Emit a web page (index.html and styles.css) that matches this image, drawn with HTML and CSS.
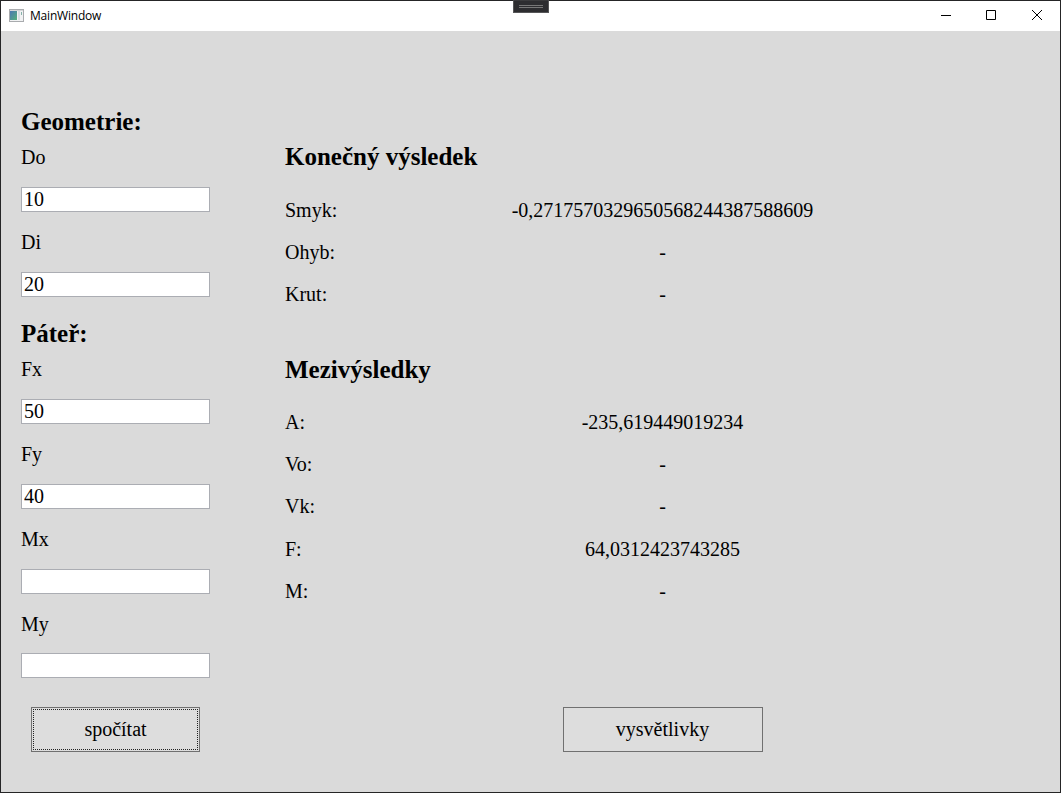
FILE: index.html
```html
<!DOCTYPE html>
<html lang="cs">
<head>
<meta charset="utf-8">
<title>MainWindow</title>
<link rel="stylesheet" href="styles.css">
</head>
<body>
<div class="window">
  <header class="titlebar">
    <svg class="app-icon" width="15" height="13" viewBox="0 0 15 13">
      <defs><linearGradient id="g" x1="0" y1="0" x2="1" y2="1"><stop offset="0" stop-color="#4a78b4"/><stop offset="1" stop-color="#55b07a"/></linearGradient></defs>
      <rect x=".5" y=".5" width="14" height="12" fill="#f1f2f3" stroke="#a9abae"/>
      <rect x="1" y="1" width="13" height="1" fill="#d4d6d8"/>
      <rect x="1" y="2" width="7" height="9" fill="url(#g)"/>
      <rect x="9" y="2" width="2" height="9" fill="#d8dfe3"/>
      <rect x="12" y="3" width="1" height="3" fill="#86b2aa"/>
    </svg>
    <span class="title">MainWindow</span>
    <div class="controls">
      <svg width="46" height="30" viewBox="0 0 46 30"><path d="M19 14.5h10" stroke="#000"/></svg>
      <svg width="46" height="30" viewBox="0 0 46 30"><path d="M18.5 9.5h9v9h-9z" fill="none" stroke="#000"/></svg>
      <svg width="46" height="30" viewBox="0 0 46 30"><path d="M18 9l10 10M28 9l-10 10" stroke="#000"/></svg>
    </div>
    <div class="debug-handle"><i></i><i></i></div>
  </header>
  <main class="content">
    <section class="form">
      <h2>Geometrie:</h2>
      <label for="do">Do</label><input id="do" value="10">
      <label for="di">Di</label><input id="di" value="20">
      <h2>Páteř:</h2>
      <label for="fx">Fx</label><input id="fx" value="50">
      <label for="fy">Fy</label><input id="fy" value="40">
      <label for="mx">Mx</label><input id="mx">
      <label for="my">My</label><input id="my">
      <button class="calculate"><span>spočítat</span></button>
    </section>
    <section class="results">
      <h2>Konečný výsledek</h2>
      <span>Smyk:</span><output>-0,2717570329650568244387588609</output>
      <span>Ohyb:</span><output>-</output>
      <span>Krut:</span><output>-</output>
      <h2 class="second">Mezivýsledky</h2>
      <span>A:</span><output>-235,619449019234</output>
      <span>Vo:</span><output>-</output>
      <span>Vk:</span><output>-</output>
      <span>F:</span><output>64,0312423743285</output>
      <span>M:</span><output>-</output>
      <button class="legend">vysvětlivky</button>
    </section>
  </main>
</div>
</body>
</html>
```

FILE: styles.css
```css
* { box-sizing: border-box; }
body { margin: 0; }
.window {
  width: 1061px; height: 793px; border: 1px solid #252526;
  display: flex; flex-direction: column; background: #dadada;
  font: 20px/23px "Liberation Serif", "Times New Roman", serif; color: #000;
}
.titlebar {
  position: relative; height: 30px; flex: none; display: flex;
  background: #fff; padding-left: 8px;
}
.app-icon { margin-top: 8px; }
.title { margin-left: 6px; font: 12px/29px "Open Sans", sans-serif; letter-spacing: -.2px; }
.controls { display: flex; margin-left: auto; height: 30px; }
.debug-handle {
  position: absolute; left: 512px; top: -1px; width: 36px; height: 13px;
  background: #2d2d30; border: 1px solid #565658; border-top-color: #3a3a3c;
  display: flex; flex-direction: column; gap: 1px; padding: 4px 5px;
}
.debug-handle i { height: 1px; background: #777; }
.content { flex: 1; display: grid; grid-template-columns: 189px 566px; column-gap: 75px; padding: 20px; }
.form, .results { display: grid; align-content: start; }
.form {
  padding-top: 42.41px; align-items: center;
  grid-template-columns: 189px; grid-template-rows: repeat(16, 42.41px);
}
.results {
  padding-top: 84.82px; align-items: end;
  grid-template-columns: 189px 377px; grid-template-rows: repeat(15, 42.41px);
}
h2 { margin: 0; font-size: 25px; line-height: 28px; font-weight: bold; }
.form h2 { align-self: end; }
.form label { padding-top: 1.6px; }
.results h2 { grid-column: span 2; padding-bottom: 7px; }
.results .second { grid-row: span 2; padding-bottom: 6.2px; }
.results > span, output { margin-bottom: -.9px; }
output { text-align: center; }
input {
  width: 189px; height: 25px; padding: 0 2px; border: 1px solid #abadb3;
  border-radius: 0; background: #fff; font: inherit; color: inherit; outline: none;
}
button {
  height: 45px; padding: 0; border: 1px solid #707070; border-radius: 0;
  background: #ddd; font: inherit; color: inherit; place-self: center;
}
.calculate { grid-row: 15 / 17; width: 169px; padding: 1px; }
.calculate span { display: flex; align-items: center; justify-content: center; width: 100%; height: 100%; border: 1px dotted #222; }
.legend { grid-row: 14 / 16; grid-column: 2; width: 200px; }
```
